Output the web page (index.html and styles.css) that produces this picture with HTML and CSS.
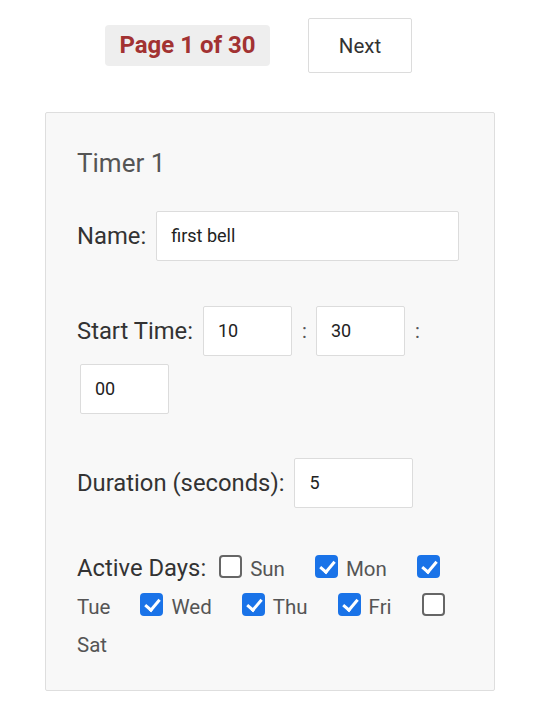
FILE: index.html
```html
<!DOCTYPE html>
<html>
<head>
<meta charset="utf-8">
<link rel="stylesheet" href="styles.css">
</head>
<body>
<div class="pager">
  <span class="page-label">Page 1 of 30</span>
  <button class="next-btn">Next</button>
</div>
<div class="card">
  <h2 class="title">Timer 1</h2>
  <div class="row">
    <span class="label">Name:</span>
    <span class="field name-field">first bell</span>
  </div>
  <div class="row wrap">
    <span class="label">Start Time:</span>
    <span class="field time-field">10</span>
    <span class="colon">:</span>
    <span class="field time-field">30</span>
    <span class="colon">:</span>
    <span class="field time-field sec">00</span>
  </div>
  <div class="row dur">
    <span class="label">Duration (seconds):</span>
    <span class="field dur-field">5</span>
  </div>
  <div class="days">
    <span class="label">Active Days:</span><span class="cb first"></span><span class="day">Sun</span><span class="cb on"></span><span class="day">Mon</span><span class="cb on"></span><span class="day">Tue</span><span class="cb on"></span><span class="day">Wed</span><span class="cb on"></span><span class="day">Thu</span><span class="cb on"></span><span class="day">Fri</span><span class="cb"></span><span class="day">Sat</span>
  </div>
</div>
</body>
</html>
```
FILE: styles.css
```css
html, body {
  margin: 0;
  padding: 0;
  background: #ffffff;
  font-family: Roboto, "Noto Sans", sans-serif;
  color: #333;
}
.pager {
  display: flex;
  justify-content: center;
  align-items: center;
  gap: 38px;
  padding: 18px 23px 0 0;
  height: 55px;
}
.page-label {
  background: #eeeeee;
  color: #a23232;
  font-weight: 700;
  font-size: 24px;
  width: 165px;
  height: 41px;
  line-height: 41px;
  text-align: center;
  border-radius: 4px;
}
.next-btn {
  width: 104px;
  height: 55px;
  background: #fff;
  border: 1px solid #dcdcdc;
  border-radius: 2px;
  font-family: Roboto, sans-serif;
  font-size: 20.5px;
  color: #333;
  padding: 0;
}
.card {
  margin: 39px 45px 0 45px;
  background: #f8f8f8;
  border: 1px solid #dedede;
  border-radius: 2px;
  padding: 31px 31px 29px 31px;
  height: 517px;
}
.title {
  margin: 0 0 29px 0;
  font-weight: 400;
  font-size: 26px;
  line-height: 38px;
  color: #555;
}
.row {
  display: flex;
  align-items: center;
  column-gap: 10px;
  margin-bottom: 45px;
}
.row.wrap {
  flex-wrap: wrap;
  row-gap: 8px;
}
.row.dur {
  margin-top: -1px;
}
.label {
  font-size: 23.8px;
  color: #333;
}
.field {
  box-sizing: border-box;
  height: 50px;
  line-height: 48px;
  background: #fff;
  border: 1px solid #dcdcdc;
  border-radius: 2px;
  padding: 0 14px;
  font-size: 18px;
  color: #222;
}
.name-field { width: 303px; }
.time-field { width: 89px; }
.time-field.sec { margin-left: 3px; }
.dur-field { width: 119px; }
.colon {
  font-size: 20px;
  color: #555;
  width: 4px;
}
.days {
  line-height: 37px;
  margin-top: -3px;
}
.cb {
  display: inline-block;
  box-sizing: border-box;
  width: 23px;
  height: 23px;
  border: 2px solid #666;
  border-radius: 4px;
  background: #fff;
  vertical-align: -2px;
  margin-right: 8px;
  position: relative;
}
.cb.first { margin-left: 13px; }
.cb.on {
  background: #1a73e8;
  border-color: #1a73e8;
}
.cb.on::after {
  content: "";
  position: absolute;
  left: 6px;
  top: 1px;
  width: 6px;
  height: 12px;
  border: solid #fff;
  border-width: 0 3px 3px 0;
  transform: rotate(40deg);
}
.day {
  font-size: 20.5px;
  color: #555;
  margin-right: 30px;
}
```
